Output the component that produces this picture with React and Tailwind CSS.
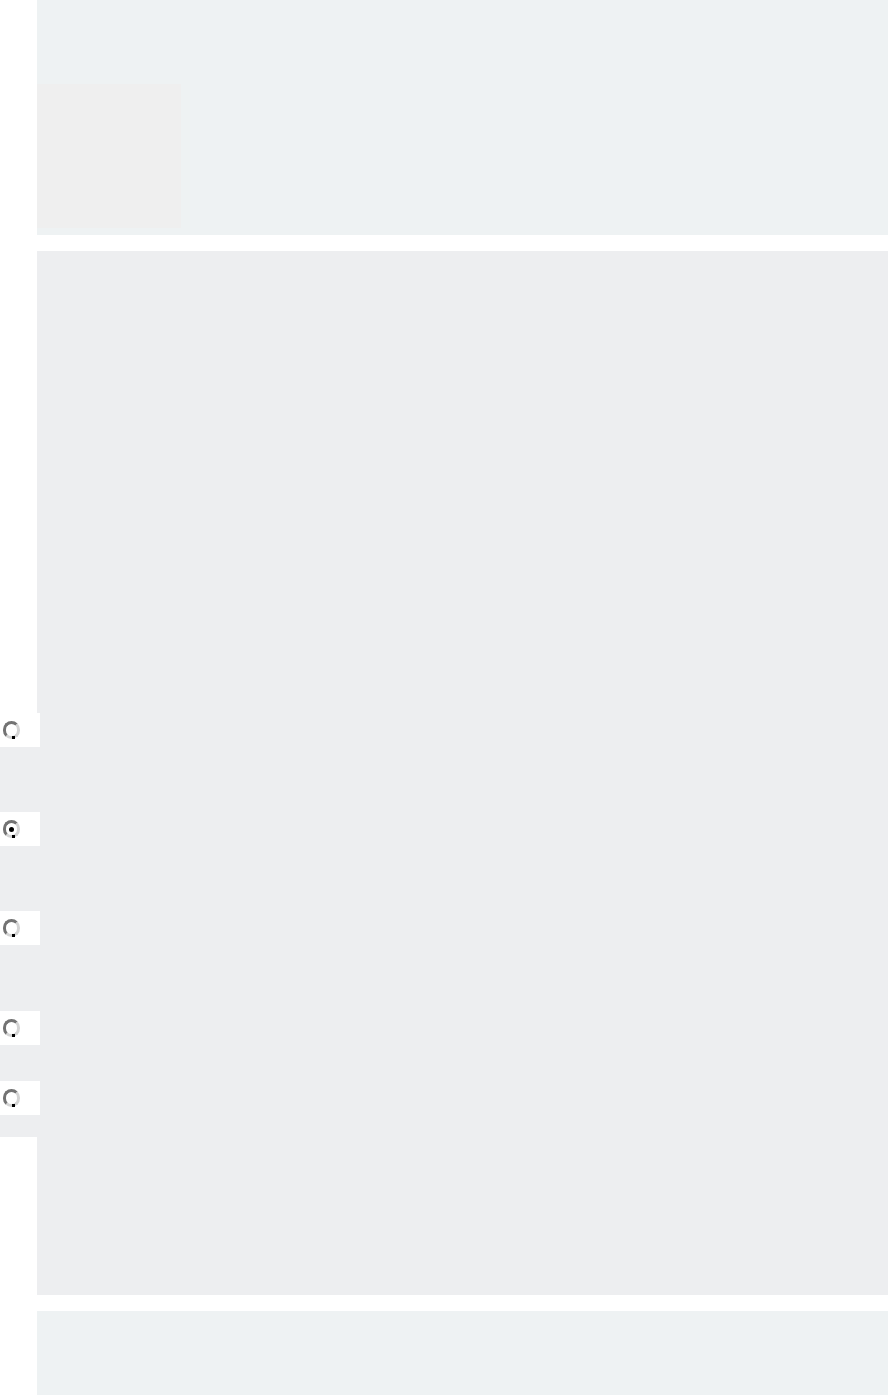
import React, { useState } from 'react';

const options = [
  { id: 'a', h: 'h-[99px]' },
  { id: 'b', h: 'h-[99px]' },
  { id: 'c', h: 'h-[100px]' },
  { id: 'd', h: 'h-[70px]' },
  { id: 'e', h: 'h-[56px]' },
];

function RadioRow({ option, checked, onChange }) {
  return (
    <div className={`${option.h} bg-[#edeef0]`}>
      <label className="flex items-center w-[40px] h-[34px] bg-white pl-[3px] cursor-pointer">
        <input
          type="radio"
          name="choice"
          checked={checked}
          onChange={() => onChange(option.id)}
          className="sr-only"
        />
        {/* old-style bevelled radio */}
        <span className="relative flex items-center justify-center w-[17px] h-[18px] rounded-full border-[3px] border-t-neutral-500 border-l-neutral-500 border-r-neutral-300 border-b-neutral-300 bg-white">
          {checked && <span className="w-[5px] h-[5px] rounded-full bg-black" />}
          <span className="absolute -bottom-[3px] right-[2px] w-[3px] h-[3px] bg-black" />
        </span>
      </label>
    </div>
  );
}

export default function App() {
  const [selected, setSelected] = useState('b');

  return (
    <div className="w-[888px] min-h-[1395px] bg-white">
      <div className="ml-[37px] h-[235px] bg-[#eef2f3] pt-[84px]">
        <div className="w-[144px] h-[144px] bg-[#efefef]" />
      </div>

      <div className="mt-4">
        <div className="ml-[37px] h-[462px] bg-[#edeef0]" />
        {options.map(o => (
          <RadioRow key={o.id} option={o} checked={selected === o.id} onChange={setSelected} />
        ))}
        <div className="ml-[37px] h-[158px] bg-[#edeef0]" />
      </div>

      <div className="mt-4 ml-[37px] h-[84px] bg-[#eef2f3]" />
    </div>
  );
}
